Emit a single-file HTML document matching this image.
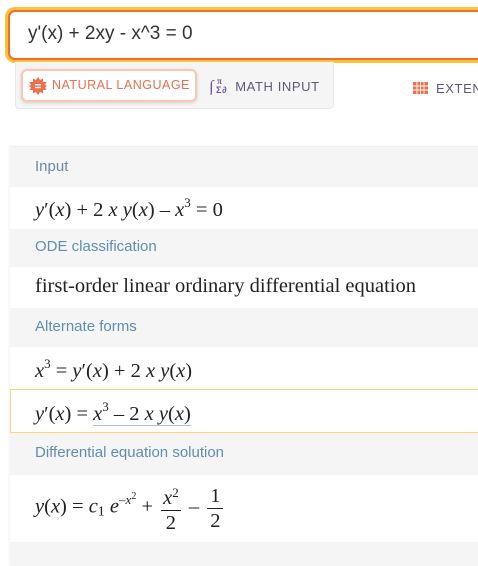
<!DOCTYPE html>
<html><head><meta charset="utf-8"><style>
*{box-sizing:border-box;margin:0;padding:0}
body{width:478px;height:556px;overflow:hidden;background:#fff;font-family:"Liberation Sans",sans-serif;position:relative}
.inp{position:absolute;left:8px;top:10px;width:490px;height:50px;border:2px solid #f26d2b;border-radius:7px;box-shadow:0 0 0 3px #fcc23a;background:#fff;font-size:19px;color:#333;padding:11px 0 0 18px}
.tb{position:absolute;left:15px;top:62px;width:319px;height:47px;background:#f5f5f5;border:1px solid #e8e8e8;border-top:none;border-radius:0 0 4px 4px}
.nl{position:absolute;left:21px;top:69px;width:176px;height:33px;background:#fff;border:2px solid #fbc7b0;border-radius:6px;box-shadow:0 1px 3px rgba(0,0,0,.15);color:#f26d4b;font-size:12.5px;letter-spacing:.5px;padding:7px 0 0 29px;white-space:nowrap}
.mi{position:absolute;left:209px;top:77px;color:#5a5a78;font-size:13px;letter-spacing:.6px;white-space:nowrap}
.ext{position:absolute;left:436px;top:81px;color:#5a5a78;font-size:13px;letter-spacing:.6px}
.card{position:absolute;left:10px;top:146px;width:480px;height:420px;background:#f5f5f5;border-top:1px solid #eee;box-shadow:-1px 0 2px rgba(0,0,0,.05)}
.h{height:40px;color:#5f8db3;font-size:15px;padding:11px 0 0 25px}
.r{background:#fff;padding-left:25px;font-family:"Liberation Serif",serif;font-size:20.5px;color:#222;position:relative}
i{font-style:italic}
sup{font-size:13px;vertical-align:9px}
</style></head><body>
<div class="inp">y'(x) + 2xy - x^3 = 0</div>
<div class="tb"></div>
<div class="nl"><svg style="position:absolute;left:6px;top:6px" width="18" height="18" viewBox="0 0 18 18"><polygon fill="#f26d4b" points="9,0 11,3 14,1.5 14,5 17.5,5 16,8 18,9 16,10.5 17.5,13 14,13 14,16.5 11,15 9,18 7,15 4,16.5 4,13 0.5,13 2,10.5 0,9 2,8 0.5,5 4,5 4,1.5 7,3"/><rect x="6" y="7" width="6" height="1.4" fill="#fff"/><rect x="6" y="9.8" width="6" height="1.4" fill="#fff"/></svg>NATURAL LANGUAGE</div>
<div class="mi"><svg style="vertical-align:-4px" width="22" height="18" viewBox="0 0 22 18"><text x="0" y="15" font-family="Liberation Serif" font-size="17" font-weight="bold" fill="#7055a8">∫</text><text x="8" y="7" font-family="Liberation Serif" font-size="9" font-weight="bold" fill="#7055a8">π</text><text x="7" y="16" font-family="Liberation Sans" font-size="9" font-weight="bold" fill="#7055a8">Σ∂</text></svg> MATH INPUT</div>
<div class="ext"><svg style="position:absolute;left:-23px;top:1px" width="15" height="12" viewBox="0 0 15 12"><rect width="15" height="12" fill="#f26d4b"/><g stroke="#fff" stroke-width=".9"><path d="M0 4H15M0 8H15M4 0V12M7.5 0V12M11 0V12"/></g></svg>EXTEN</div>
<div class="card">
<div class="h" style="color:#6a8aa4">Input</div>
<div class="r" style="height:42px;padding-top:8px"><i>y</i>′(<i>x</i>) + 2 <i>x</i> <i>y</i>(<i>x</i>) – <i>x</i><sup>3</sup> = 0</div>
<div class="h" style="height:38px;padding-top:9px">ODE classification</div>
<div class="r" style="height:41px;padding-top:8px">first-order linear ordinary differential equation</div>
<div class="h" style="height:39px;padding-top:10px">Alternate forms</div>
<div class="r" style="height:42px;padding-top:9px"><i>x</i><sup>3</sup> = <i>y</i>′(<i>x</i>) + 2 <i>x</i> <i>y</i>(<i>x</i>)</div>
<div class="r" style="height:44px;padding-top:9px;border:1px solid #fcd57a;padding-left:24px"><i>y</i>′(<i>x</i>) = <span style="border-bottom:1px solid #a8c4d8"><i>x</i><sup>3</sup> – 2 <i>x</i> <i>y</i>(<i>x</i>)</span></div>
<div class="h" style="height:42px;padding-top:11px">Differential equation solution</div>
<div class="r" style="height:67px;padding-top:6px"><i>y</i>(<i>x</i>) = <i>c</i><span style="font-size:14px;vertical-align:-3px">1</span> <i>e</i><sup style="vertical-align:9px">–<i>x</i><span style="font-size:10px;vertical-align:5px">2</span></sup> +
<span style="display:inline-block;vertical-align:middle;text-align:center;line-height:24px;margin:0 3px"><span style="display:block;border-bottom:1px solid #222;padding:0 2px"><i>x</i><sup style="vertical-align:7px">2</sup></span><span style="display:block">2</span></span> –
<span style="display:inline-block;vertical-align:middle;text-align:center;line-height:24px;margin:0 3px"><span style="display:block;border-bottom:1px solid #222;padding:0 3px">1</span><span style="display:block">2</span></span></div>
</div>
</body></html>
